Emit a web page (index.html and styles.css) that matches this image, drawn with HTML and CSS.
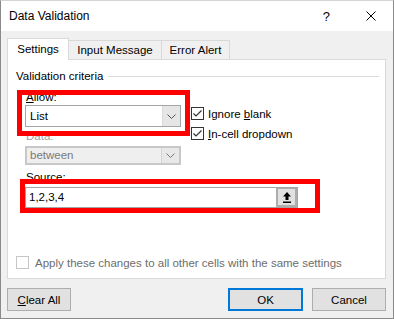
FILE: index.html
```html
<!DOCTYPE html>
<html lang="en">
  <head>
    <meta charset="UTF-8" />
    <title>Data Validation</title>
    <link rel="stylesheet" href="styles.css">
  </head>
  <body>
    <div class="dialog">
      <div class="titlebar">
        <span class="title">Data Validation</span>
        <span class="help">?</span>
        <svg class="close" width="10" height="10" viewBox="0 0 10 10">
          <path d="M0.5 0.5 L9.5 9.5 M9.5 0.5 L0.5 9.5" stroke="#000" stroke-width="1" fill="none" />
        </svg>
      </div>
      <div class="client">
        <div class="tabs">
          <div class="tab tab-settings active">Settings</div>
          <div class="tab tab-input">Input Message</div>
          <div class="tab tab-error">Error Alert</div>
        </div>
        <div class="panel">
          <div class="group-title"><span>Validation criteria</span></div>
          <div class="criteria">
            <label class="field-label"><u>A</u>llow:</label>
            <div class="combo">
              <span class="combo-text">List</span>
              <span class="combo-drop">
                <svg width="9" height="5" viewBox="0 0 9 5"><path d="M0.5 0.5 L4.5 4.5 L8.5 0.5" stroke="#555" fill="none" /></svg>
              </span>
            </div>
            <div class="checks">
              <label class="check">
                <span class="box">
                  <svg width="11" height="11" viewBox="0 0 11 11"><path d="M1.5 5.5 L4 8 L9.5 2.5" stroke="#333" stroke-width="1.2" fill="none" /></svg>
                </span>
                <span>Ignore <u>b</u>lank</span>
              </label>
              <label class="check">
                <span class="box">
                  <svg width="11" height="11" viewBox="0 0 11 11"><path d="M1.5 5.5 L4 8 L9.5 2.5" stroke="#333" stroke-width="1.2" fill="none" /></svg>
                </span>
                <span><u>I</u>n-cell dropdown</span>
              </label>
            </div>
            <label class="field-label label-data disabled">Data:</label>
            <div class="combo combo-disabled">
              <span class="combo-text">between</span>
              <span class="combo-drop">
                <svg width="9" height="5" viewBox="0 0 9 5"><path d="M0.5 0.5 L4.5 4.5 L8.5 0.5" stroke="#777" fill="none" /></svg>
              </span>
            </div>
            <label class="field-label label-source"><u>S</u>ource:</label>
            <div class="source">
              <span class="source-text">1,2,3,4</span>
              <span class="ref-button">
                <svg width="8" height="11" viewBox="0 0 8 11">
                  <path d="M4 0 L8 4.5 H5.5 V8 H2.5 V4.5 H0 Z" fill="#000" />
                  <rect x="0" y="9.5" width="8" height="1.5" fill="#000" />
                </svg>
              </span>
            </div>
          </div>
          <label class="check apply disabled">
            <span class="box"></span>
            <span>Apply these changes to all other cells with the same settings</span>
          </label>
        </div>
        <div class="buttons">
          <button type="button" class="btn btn-clear"><u>C</u>lear All</button>
          <button type="button" class="btn btn-ok">OK</button>
          <button type="button" class="btn btn-cancel">Cancel</button>
        </div>
      </div>
      <div class="annot annot-allow"></div>
      <div class="annot annot-source"></div>
    </div>
  </body>
</html>
```

FILE: styles.css
```css
body {
  margin: 0;
  font-family: "Liberation Sans", Arial, sans-serif;
  font-size: 11.5px;
  color: #000;
  background: #f0f0f0;
}
.dialog {
  position: relative;
  width: 394px;
  height: 319px;
  box-sizing: border-box;
  border: 1px solid #8a8a8a;
  border-top-color: #d4d4d4;
  background: #f0f0f0;
}
.titlebar {
  height: 30px;
  background: #fff;
  display: flex;
  align-items: center;
  padding-left: 8px;
}
.title {
  flex: 1;
  font-size: 12px;
}
.help {
  font-size: 13px;
  margin-right: 36px;
}
.close {
  margin-right: 17px;
}
.client {
  padding: 7px 7px 0 6px;
}
.tabs {
  display: flex;
  align-items: flex-end;
  height: 21px;
}
.tab {
  box-sizing: border-box;
  height: 19px;
  line-height: 18px;
  border: 1px solid #d9d9d9;
  border-bottom: none;
  text-align: center;
  background: #f0f0f0;
  margin-left: -1px;
}
.tab.active {
  position: relative;
  z-index: 1;
  height: 22px;
  line-height: 20px;
  margin-bottom: -1px;
  margin-left: 0;
  background: #fff;
}
.tab-settings { width: 62px; }
.tab-input { width: 94px; }
.tab-error { width: 69px; }
.panel {
  box-sizing: border-box;
  height: 220px;
  background: #fff;
  border: 1px solid #d9d9d9;
  display: flex;
  flex-direction: column;
}
.group-title {
  display: flex;
  align-items: center;
  margin-top: 8px;
  padding-left: 8px;
  padding-right: 6px;
  line-height: 16px;
}
.group-title::after {
  content: "";
  flex: 1;
  height: 1px;
  background: #dcdcdc;
  margin-left: 5px;
}
.criteria {
  display: grid;
  grid-template-columns: 156px auto;
  grid-template-rows: 15px 22px 19px 19px 22px 21px;
  padding-left: 17px;
  margin-top: 6px;
}
.field-label {
  display: block;
  padding-left: 1px;
  line-height: 15px;
  grid-column: 1;
}
.label-data {
  padding-top: 2px;
}
.label-source {
  padding-top: 5px;
}
.disabled {
  color: #a0a0a0;
}
.combo {
  grid-column: 1;
  box-sizing: border-box;
  display: flex;
  align-items: stretch;
  border: 1px solid #a5a5a5;
  background: #fff;
}
.combo-text {
  flex: 1;
  padding-left: 4px;
  line-height: 20px;
}
.combo-drop {
  width: 17px;
  background: #e6e6e6;
  border-left: 1px solid #dadada;
  display: flex;
  align-items: center;
  justify-content: center;
}
.combo-disabled {
  background: #efefef;
  border: 2px solid #c8c8c8;
  color: #7a7a7a;
}
.combo-disabled .combo-text {
  line-height: 15px;
  padding-left: 3px;
}
.combo-disabled .combo-drop {
  background: #e8e8e8;
  border-left: 1px solid #d4d4d4;
}
.checks {
  grid-column: 2;
  grid-row: 1 / span 3;
  padding-top: 17px;
  padding-left: 10px;
}
.check {
  display: flex;
  align-items: center;
  height: 13px;
  margin-bottom: 7px;
  white-space: nowrap;
}
.box {
  box-sizing: border-box;
  width: 13px;
  height: 13px;
  border: 1px solid #333;
  background: #fff;
  margin-right: 4px;
  display: flex;
  align-items: center;
  justify-content: center;
}
.source {
  grid-column: 1 / span 2;
  grid-row: 6;
  box-sizing: border-box;
  width: 273px;
  height: 21px;
  display: flex;
  border: 1px solid #a5a5a5;
  background: #fff;
}
.source-text {
  flex: 1;
  padding-left: 3px;
  line-height: 19px;
}
.ref-button {
  box-sizing: border-box;
  width: 21px;
  border: 2px solid #adadad;
  border-top-width: 1px;
  background: #e1e1e1;
  display: flex;
  align-items: center;
  justify-content: center;
}
.apply {
  margin-top: auto;
  margin-bottom: 9px;
  padding-left: 8px;
  color: #6d6d6d;
}
.apply .box {
  border-color: #c6c6c6;
  margin-right: 6px;
}
.buttons {
  display: flex;
  margin-top: 9px;
}
.btn {
  box-sizing: border-box;
  height: 23px;
  font-family: inherit;
  font-size: 11.5px;
  color: #000;
  background: #e1e1e1;
  border: 1px solid #adadad;
  padding: 0;
}
.btn-clear {
  width: 64px;
}
.btn-ok {
  width: 75px;
  margin-left: auto;
  border: 2px solid #0078d7;
}
.btn-cancel {
  width: 74px;
  margin-left: 9px;
}
.annot {
  position: absolute;
  box-sizing: border-box;
  border: 5px solid #ff0000;
}
.annot-allow {
  left: 16px;
  top: 89px;
  width: 173px;
  height: 46px;
}
.annot-source {
  left: 19px;
  top: 178px;
  width: 300px;
  height: 34px;
}
```
